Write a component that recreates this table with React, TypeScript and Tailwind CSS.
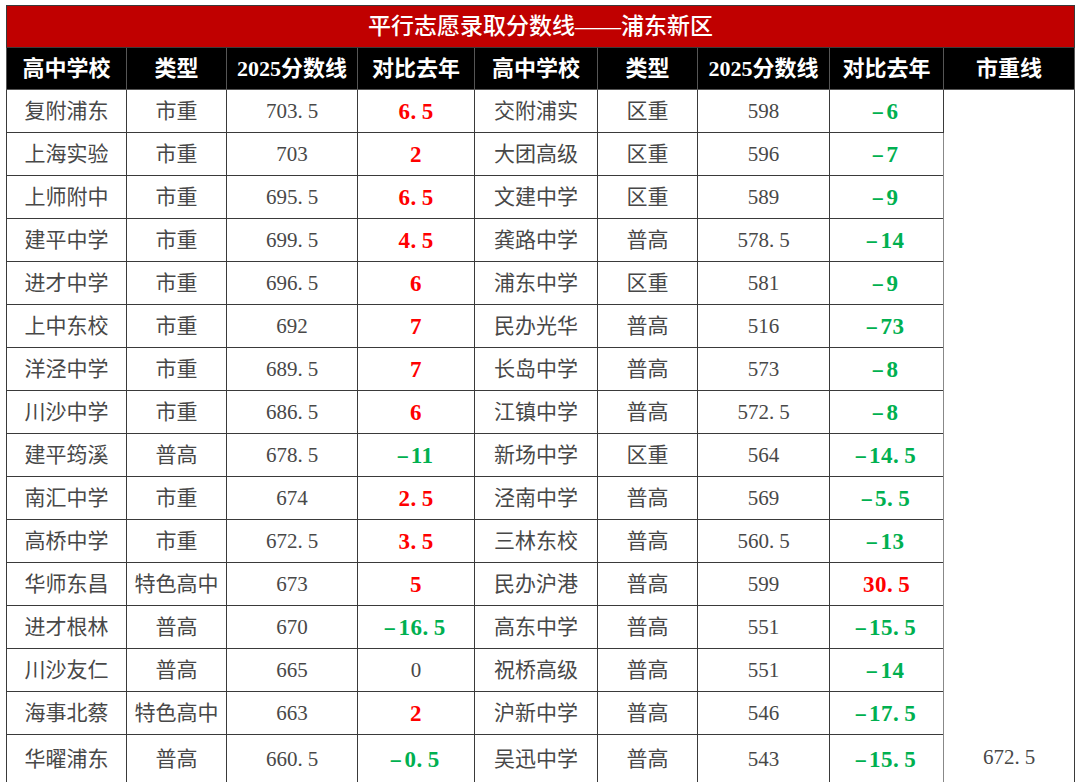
import React from 'react';

type Row = { school: string; type: string; score: string; diff: string };

const left: Row[] = [
  { school: '复附浦东', type: '市重', score: '703.5', diff: '6.5' },
  { school: '上海实验', type: '市重', score: '703', diff: '2' },
  { school: '上师附中', type: '市重', score: '695.5', diff: '6.5' },
  { school: '建平中学', type: '市重', score: '699.5', diff: '4.5' },
  { school: '进才中学', type: '市重', score: '696.5', diff: '6' },
  { school: '上中东校', type: '市重', score: '692', diff: '7' },
  { school: '洋泾中学', type: '市重', score: '689.5', diff: '7' },
  { school: '川沙中学', type: '市重', score: '686.5', diff: '6' },
  { school: '建平筠溪', type: '普高', score: '678.5', diff: '-11' },
  { school: '南汇中学', type: '市重', score: '674', diff: '2.5' },
  { school: '高桥中学', type: '市重', score: '672.5', diff: '3.5' },
  { school: '华师东昌', type: '特色高中', score: '673', diff: '5' },
  { school: '进才根林', type: '普高', score: '670', diff: '-16.5' },
  { school: '川沙友仁', type: '普高', score: '665', diff: '0' },
  { school: '海事北蔡', type: '特色高中', score: '663', diff: '2' },
  { school: '华曜浦东', type: '普高', score: '660.5', diff: '-0.5' },
];

const right: Row[] = [
  { school: '交附浦实', type: '区重', score: '598', diff: '-6' },
  { school: '大团高级', type: '区重', score: '596', diff: '-7' },
  { school: '文建中学', type: '区重', score: '589', diff: '-9' },
  { school: '龚路中学', type: '普高', score: '578.5', diff: '-14' },
  { school: '浦东中学', type: '区重', score: '581', diff: '-9' },
  { school: '民办光华', type: '普高', score: '516', diff: '-73' },
  { school: '长岛中学', type: '普高', score: '573', diff: '-8' },
  { school: '江镇中学', type: '普高', score: '572.5', diff: '-8' },
  { school: '新场中学', type: '区重', score: '564', diff: '-14.5' },
  { school: '泾南中学', type: '普高', score: '569', diff: '-5.5' },
  { school: '三林东校', type: '普高', score: '560.5', diff: '-13' },
  { school: '民办沪港', type: '普高', score: '599', diff: '30.5' },
  { school: '高东中学', type: '普高', score: '551', diff: '-15.5' },
  { school: '祝桥高级', type: '普高', score: '551', diff: '-14' },
  { school: '沪新中学', type: '普高', score: '546', diff: '-17.5' },
  { school: '吴迅中学', type: '普高', score: '543', diff: '-15.5' },
];

const widths = [120, 100, 131, 117, 123, 100, 132, 114, 131];
const heads = ['高中学校', '类型', '2025分数线', '对比去年', '高中学校', '类型', '2025分数线', '对比去年', '市重线'];

// SimSun-style wide period and minus
function Num({ v }: { v: string }) {
  const neg = v.startsWith('-');
  const body = neg ? v.slice(1) : v;
  const [a, b] = body.split('.');
  return (
    <>
      {neg && <span className="inline-block scale-x-[1.7] mr-[4px] font-normal">-</span>}
      {a}
      {b !== undefined && (
        <>
          <span className="mr-[5px]">.</span>
          {b}
        </>
      )}
    </>
  );
}

function Diff({ v }: { v: string }) {
  if (v === '0') return <span>0</span>;
  const neg = v.startsWith('-');
  return (
    <span className={`font-bold text-[23px] tracking-[0.5px] ${neg ? 'text-[#00b050]' : 'text-[#ff0000]'}`}>
      <Num v={v} />
    </span>
  );
}

const cell = 'border border-[#3a3a3a] text-center align-middle p-0';

export default function App() {
  return (
    <div
      className="bg-white w-[1080px] h-[782px] overflow-hidden pl-[6px] pt-[5px]"
      style={{ fontFamily: '"Liberation Serif", "Noto Sans CJK SC", serif' }}
    >
      <table className="table-fixed border-collapse w-[1068px] text-[21px] text-[#484848] leading-none">
        <colgroup>
          {widths.map((w, i) => (
            <col key={i} style={{ width: w }} />
          ))}
        </colgroup>
        <thead>
          <tr className="h-[42px]">
            <th colSpan={9} className="border border-[#3a3a3a] bg-[#c00000] text-white text-[23px] font-medium text-center">
              平行志愿录取分数线——浦东新区
            </th>
          </tr>
          <tr className="h-[42px]">
            {heads.map((h, i) => (
              <th key={i} className="border border-[#555] bg-black text-white text-[22px] font-bold text-center">
                {h}
              </th>
            ))}
          </tr>
        </thead>
        <tbody>
          {left.map((l, i) => {
            const r = right[i];
            return (
              <tr key={i} className={i === 15 ? 'h-[50px]' : 'h-[43px]'}>
                <td className={cell}>{l.school}</td>
                <td className={cell}>{l.type}</td>
                <td className={cell}><Num v={l.score} /></td>
                <td className={cell}><Diff v={l.diff} /></td>
                <td className={cell}>{r.school}</td>
                <td className={cell}>{r.type}</td>
                <td className={cell}><Num v={r.score} /></td>
                <td className={cell}><Diff v={r.diff} /></td>
                {i === 0 && (
                  <td rowSpan={16} className="border border-[#3a3a3a] border-l-[#888] text-center align-bottom pb-[16px]">
                    <Num v="672.5" />
                  </td>
                )}
              </tr>
            );
          })}
        </tbody>
      </table>
    </div>
  );
}
